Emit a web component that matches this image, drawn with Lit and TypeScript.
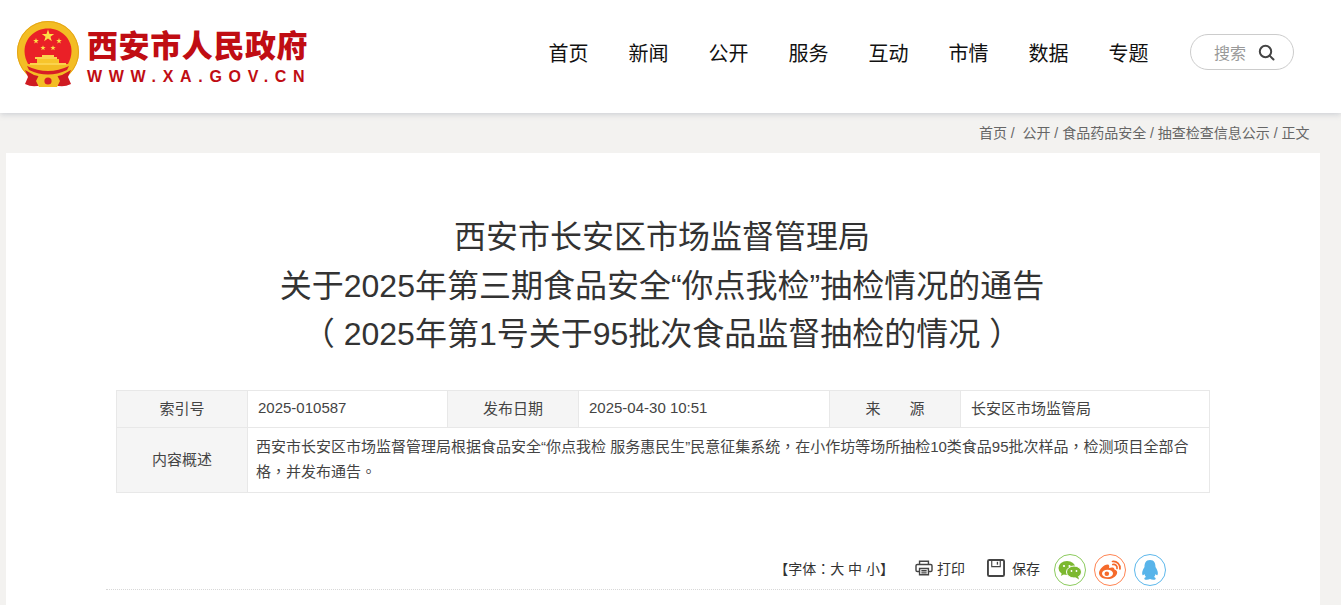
import { LitElement, html, css, svg, unsafeCSS } from "lit";
import { customElement } from "lit/decorators.js";

const FONT = unsafeCSS(`"Liberation Sans", "Noto Sans CJK SC", sans-serif`);

const star = (cx: number, cy: number, r: number) => {
  const pts: string[] = [];
  for (let i = 0; i < 10; i++) {
    const a = -Math.PI / 2 + (i * Math.PI) / 5;
    const rr = i % 2 ? r * 0.4 : r;
    pts.push(`${(cx + rr * Math.cos(a)).toFixed(2)},${(cy + rr * Math.sin(a)).toFixed(2)}`);
  }
  return svg`<polygon points=${pts.join(" ")} fill="#fde047"/>`;
};

const emblem = html`<svg class="emblem" viewBox="0 0 64 68" width="64" height="68">
  <circle cx="32" cy="31" r="31" fill="#f3bd24"/>
  <circle cx="32" cy="31" r="30.5" fill="none" stroke="#e5a516" stroke-width="1"/>
  <path d="M32 7.5 C45.5 7.5 55.5 18 55.5 30 C55.5 35 54 39 52 43 L12 43 C10 39 8.5 35 8.5 30 C8.5 18 18.5 7.5 32 7.5 Z" fill="#ea2027"/>
  ${star(32, 15, 6.5)} ${star(20, 20, 3)} ${star(43, 20, 3)} ${star(27, 27, 2.8)} ${star(37, 27, 2.8)}
  <path d="M26 34 h12 v2 h3 v2 h-22 v-2 h7 z" fill="#fbd34d"/>
  <path d="M21 38 h22 v5 h-22 z" fill="#f7c52c"/>
  <path d="M14 42 h36 v2 h-36 z" fill="#fbd34d"/>
  <path d="M11 45 Q32 55 53 45 L51 49 Q32 58 13 49 Z" fill="#d71f26"/>
  <path d="M9 49 L18 54 L26 56 L25 64 Q17 67 9 63 L12 56 Z M55 49 L46 54 L38 56 L39 64 Q47 67 55 63 L52 56 Z" fill="#cf1b22"/>
  <path d="M23 54 Q32 57 41 54 L44 60 L41 66 H23 L20 60 Z" fill="#f3bd24"/>
  <circle cx="32" cy="60" r="3.6" fill="#d71f26"/>
</svg>`;

@customElement("app-root")
export class AppRoot extends LitElement {
  static styles = css`
    :host { display: block; font-family: ${FONT}; background: #f3f2f0; height: 605px; overflow: hidden; }
    .header { height: 113px; background: #fff; box-shadow: 0 1px 6px rgba(120,130,150,.35); display: flex; align-items: flex-start; position: relative; }
    .logo { margin: 21px 0 0 16px; display: flex; width: 294px; gap: 7px; }
    .emblem { flex: none; }
    .wm { display: flex; flex-direction: column; padding-top: 8px; }
    .wm b { font-size: 31px; line-height: 36px; color: #c00d13; font-weight: 900; letter-spacing: .6px; white-space: nowrap; }
    .wm span { font-size: 16px; line-height: 20px; margin-top: 2px; color: #c00d13; font-weight: 700; letter-spacing: 6.7px; white-space: nowrap; }
    .nav { display: flex; gap: 40px; margin: 40px 0 0 238.4px; font-size: 20px; line-height: 28px; color: #111; }
    .search { margin: 34px 0 0 41.6px; width: 104px; height: 36px; box-sizing: border-box; border: 1px solid #ccc; border-radius: 18px; display: flex; align-items: center; padding-left: 23px; gap: 12px; font-size: 16px; color: #999; }
    .crumb { height: 40px; box-sizing: border-box; padding: 11px 31.5px 0 0; text-align: right; font-size: 14px; line-height: 18px; color: #666; }
    .card { margin: 0 21px 0 6px; background: #fff; height: 452px; padding: 60px 110px 0 100px; box-sizing: border-box; }
    h1 { margin: 0; font-weight: 400; font-size: 32px; line-height: 48.5px; text-align: center; color: #333; padding-left: 8px; }
    table { margin: 31px 0 0 10px; width: 1094px; border-collapse: collapse; table-layout: fixed; font-size: 15px; color: #444; }
    td { border: 1px solid #e8e8e8; }
    .k { background: #f5f5f5; text-align: center; }
    .v { padding-left: 10px; }
    .r1 td { height: 37px; box-sizing: border-box; padding-top: 0; padding-bottom: 3px; }
    .r2 .k { padding-bottom: 3px; }
    .desc { padding: 6px 10px 8px 8px; line-height: 25px; height: 65px; box-sizing: border-box; }
    .p { font-family: "Liberation Sans", "Noto Sans CJK TC", sans-serif; }
    .tools { margin-top: 60px; height: 35px; display: flex; align-items: center; justify-content: flex-end; font-size: 14px; color: #333; padding-right: 44px; }
    .font { margin: 0 21px 4px 0; white-space: nowrap; }
    .tool { display: flex; align-items: center; gap: 4px; margin: 0 22px 4px 0; white-space: nowrap; }
    .tool.save { margin-right: 14px; gap: 7px; }
    .ring { width: 30px; height: 30px; border-radius: 50%; border: 1px solid; display: flex; align-items: center; justify-content: center; margin-right: 8px; }
    .ring:last-child { margin-right: 0; }
    .wx { border-color: #8ccb5e; } .wb { border-color: #ff8452; } .qq { border-color: #5db8ec; }
    .rule { border-top: 1px dotted #d8d8d8; width: 1114px; margin-top: 1px; }
  `;

  render() {
    const nav = ["首页", "新闻", "公开", "服务", "互动", "市情", "数据", "专题"];
    return html`
      <div class="header">
        <div class="logo">
          ${emblem}
          <div class="wm"><b>西安市人民政府</b><span>WWW.XA.GOV.CN</span></div>
        </div>
        <div class="nav">${nav.map((n) => html`<span>${n}</span>`)}</div>
        <div class="search">搜索
          <svg width="17" height="17" viewBox="0 0 17 17" fill="none" stroke="#444" stroke-width="2"><circle cx="7.5" cy="7.5" r="5.7"/><path d="M11.6 11.6 L15.5 15.5" stroke-linecap="round"/></svg>
        </div>
      </div>
      <div class="crumb">首页 /&nbsp; 公开 / 食品药品安全 / 抽查检查信息公示 / 正文</div>
      <div class="card">
        <h1>西安市长安区市场监督管理局<br>关于2025年第三期食品安全“你点我检”抽检情况的通告<br>（ 2025年第1号关于95批次食品监督抽检的情况 ）</h1>
        <table>
          <colgroup><col style="width:131px"><col style="width:200px"><col style="width:131px"><col style="width:251px"><col style="width:131px"><col></colgroup>
          <tr class="r1">
            <td class="k">索引号</td><td class="v">2025-010587</td>
            <td class="k">发布日期</td><td class="v">2025-04-30 10:51</td>
            <td class="k">来&nbsp;&nbsp;&nbsp;&nbsp;&nbsp;&nbsp;&nbsp;源</td><td class="v">长安区市场监管局</td>
          </tr>
          <tr class="r2">
            <td class="k">内容概述</td>
            <td class="desc" colspan="5">西安市长安区市场监督管理局根据食品安全“你点我检 服务惠民生”民意征集系统<span class="p">，</span>在小作坊等场所抽检10类食品95批次样品<span class="p">，</span>检测项目全部合<br>格<span class="p">，</span>并发布通告<span class="p">。</span></td>
          </tr>
        </table>
        <div class="tools">
          <span class="font">【字体<span class="p">：</span>大 中 小】</span>
          <span class="tool">
            <svg width="18" height="16" viewBox="0 0 20 18" fill="none" stroke="#444" stroke-width="1.6"><path d="M5 5 V1.5 H15 V5 M5 13 H2.5 Q1 13 1 11.5 V6.5 Q1 5 2.5 5 H17.5 Q19 5 19 6.5 V11.5 Q19 13 17.5 13 H15"/><path d="M5 9.5 H15 V16.5 H5 Z M7 12 H13 M7 14.5 H13"/></svg>
            打印</span>
          <span class="tool save">
            <svg width="18" height="18" viewBox="0 0 19 19" fill="none" stroke="#444" stroke-width="2"><path d="M2.5 1 H16.5 Q18 1 18 2.5 V16.5 Q18 18 16.5 18 H2.5 Q1 18 1 16.5 V2.5 Q1 1 2.5 1 Z"/><path d="M5 1 V8 H14 V1" stroke-width="1.2"/><path d="M11 3 V6" stroke-width="1.4"/></svg>
            保存</span>
          <span class="ring wx"><svg width="24" height="20" viewBox="0 0 24 20"><ellipse cx="9" cy="8" rx="8.5" ry="7" fill="#7cb82f"/><path d="M4 12 L3 16 L8 13 Z" fill="#7cb82f"/><ellipse cx="16" cy="12" rx="7.5" ry="6" fill="#7cb82f" stroke="#fff" stroke-width="1"/><path d="M20 16 L21 19.5 L17 17 Z" fill="#7cb82f"/><circle cx="6" cy="6" r="1.1" fill="#fff"/><circle cx="11.5" cy="6" r="1.1" fill="#fff"/><circle cx="13.5" cy="11" r=".9" fill="#fff"/><circle cx="18.5" cy="11" r=".9" fill="#fff"/></svg></span>
          <span class="ring wb"><svg width="24" height="20" viewBox="0 0 24 20" fill="none"><path d="M10 19 C4 19 1 16 1 13 C1 9.5 6 4.5 9.5 4.5 C11.5 4.5 11.5 6.5 11 8 C13.5 7 16.5 7 16.5 9.5 C19 10 19.5 12 19 13.5 C18 17 14 19 10 19 Z" fill="#f56a2b"/><ellipse cx="9.5" cy="13.5" rx="5.5" ry="3.8" fill="#fff"/><circle cx="8.8" cy="13.7" r="2.3" fill="#f56a2b"/><path d="M14.5 1.5 C19 1 22.5 4.5 22 9 M14.8 4.5 C17.5 4 19.5 6 19 8.5" stroke="#f56a2b" stroke-width="1.7" stroke-linecap="round"/></svg></span>
          <span class="ring qq"><svg width="20" height="22" viewBox="0 0 20 22"><path d="M10 1 C14.5 1 15.5 4.5 15.5 8 C17.5 11 18.5 14 17.5 16 C16.8 16.5 16 15.8 15.5 15 C15.3 16.2 14.8 17.2 14 18 C15.5 18.7 16 19.5 15.5 20.2 C14.5 21 11.5 20.8 10 20 C8.5 20.8 5.5 21 4.5 20.2 C4 19.5 4.5 18.7 6 18 C5.2 17.2 4.7 16.2 4.5 15 C4 15.8 3.2 16.5 2.5 16 C1.5 14 2.5 11 4.5 8 C4.5 4.5 5.5 1 10 1 Z" fill="#58b4ea"/></svg></span>
        </div>
        <div class="rule"></div>
      </div>
    `;
  }
}
